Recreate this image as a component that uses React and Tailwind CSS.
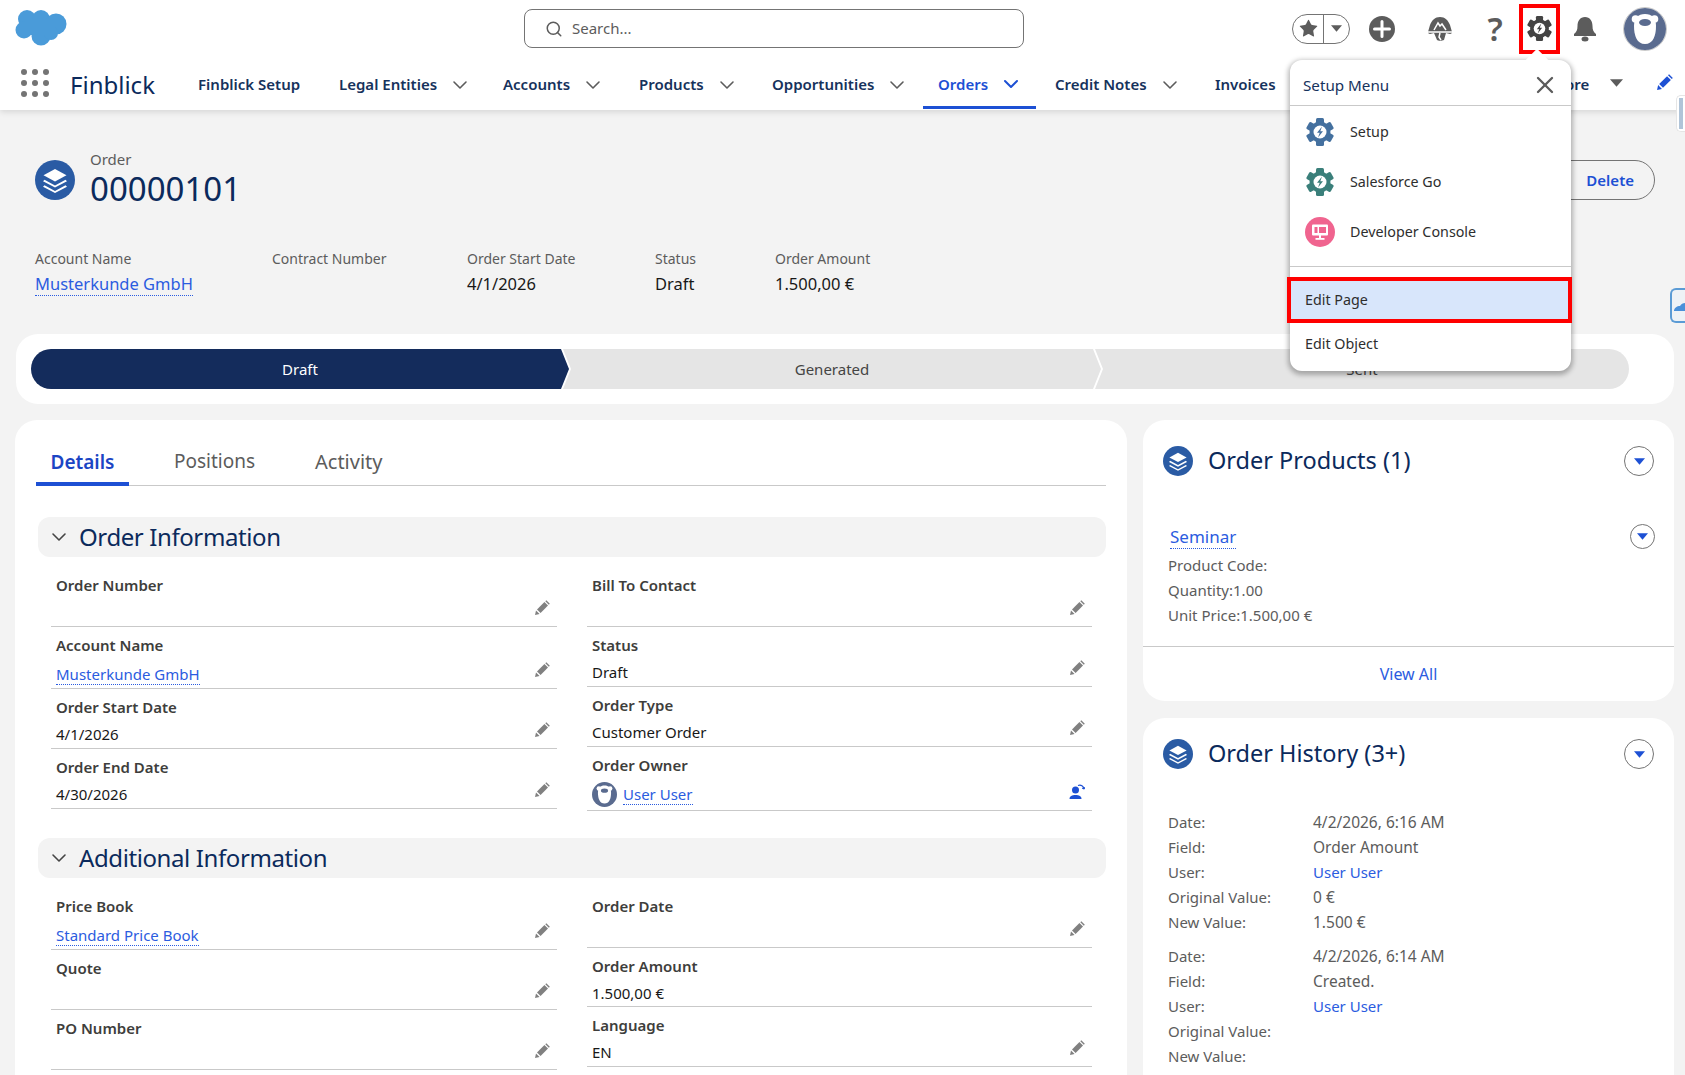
import React from "react";
import { ChevronDown, Star, Search, X } from "lucide-react";

const Pencil = ({ color = "#808080", size = 16 }) => (
  <svg width={size} height={size} viewBox="0 0 16 16" className="shrink-0">
    <path d="M1 15l1-4.6 3.6 3.6z" fill={color} />
    <path d="M3 9.4L10.4 2l3.6 3.6L6.6 13z" fill={color} />
    <path d="M11.3 1.2l1-1 3.5 3.5-1 1z" fill={color} />
  </svg>
);

const Layers = ({ size = 40 }) => (
  <svg width={size} height={size} viewBox="0 0 40 40" className="shrink-0">
    <ellipse cx="20" cy="20" rx="20" ry="20" fill="#2a5ba4" />
    <path d="M20 9l11.5 6.2L20 21.4 8.500 15.200z" fill="#fff" />
    <path d="M9.500 19.800l10.500 5.600 10.500-5.600 1.500 1.500L20 27.600 8 21.300z" fill="#fff" />
    <path d="M9.500 25.300l10.500 5.600 10.500-5.600 1.500 1.500L20 33 8 26.800z" fill="#fff" />
  </svg>
);

const Gear = ({ color, size = 28 }) => (
  <svg width={size} height={size} viewBox="0 0 28 28" className="shrink-0">
    {[0, 60, 120, 180, 240, 300].map((a) => (
      <rect key={a} x="10" y="0" width="8" height="8" rx="1.500" fill={color} transform={`rotate(${a} 14 14)`} />
    ))}
    <circle cx="14" cy="14" r="10.500" fill={color} />
    <circle cx="14" cy="14" r="6.500" fill="#fff" />
    <path d="M16 8.500l-5 6.300h2.700l-1.700 4.700 5-6.300h-2.700z" fill={color} />
  </svg>
);

const Bear = ({ size = 42 }) => (
  <svg width={size} height={size} viewBox="0 0 42 42" className="shrink-0">
    <circle cx="21" cy="21" r="21" fill="#5a6b8f" />
    <circle cx="11.500" cy="11" r="3.800" fill="#fff" />
    <circle cx="30.500" cy="11" r="3.800" fill="#fff" />
    <path d="M21 6c7 0 11 4 11 12 0 10-3 18-11 18S10 28 10 18C10 10 14 6 21 6z" fill="#fff" />
    <ellipse cx="21" cy="14.500" rx="6" ry="3.500" fill="#5a6b8f" />
  </svg>
);

const Caret = ({ color = "#5c5c5c", w = 12, h = 7 }) => (
  <svg width={w} height={h} viewBox="0 0 12 7" className="shrink-0">
    <path d="M0 0h12L6 7z" fill={color} />
  </svg>
);

const MenuCircle = ({ size = 30 }) => (
  <div className="flex shrink-0 items-center justify-center rounded-full border border-[#747474]" style={{ width: size, height: size }}>
    <Caret color="#1d50d4" w={11} h={7} />
  </div>
);

const A = ({ children, className = "" }) => (
  <span className={`border-b border-dotted border-[#2b5ce0] text-[#2b5ce0] ${className}`}>{children}</span>
);

const Field = ({ h, label, value, link, owner, locked }) => (
  <div className={`flex border-b border-[#c9c9c9] pl-[5px] pr-[7px] ${h}`}>
    <div className="flex-1 pt-[8px]">
      <div className="text-[15px] font-semibold leading-[20px] text-[#3e3e3c]">{label}</div>
      {value && !owner && (
        <div className={`${link ? "mt-[9px]" : "mt-[7px]"} text-[15px] leading-[20px] text-[#181818]`}>
          {link ? <A>{value}</A> : value}
        </div>
      )}
      {owner && (
        <div className="mt-[7px] flex items-center gap-[6px] text-[15px] leading-[20px]">
          <Bear size={25} />
          <A>{value}</A>
        </div>
      )}
    </div>
    <div className="self-end pb-[10px]">
      {owner ? (
        <svg width="16" height="16" viewBox="0 0 16 16">
          <circle cx="6.500" cy="6" r="3.500" fill="#1d50d4" />
          <path d="M0.500 15c0-3 2.500-4 6-4s6 1 6 4z" fill="#1d50d4" />
          <path d="M9 1.500c3-1 5.500.5 6 3.500M15 5l-1.800-1M15 5l1-1.800" stroke="#1d50d4" strokeWidth="1.300" fill="none" />
        </svg>
      ) : locked ? null : (
        <Pencil />
      )}
    </div>
  </div>
);

const SectionHead = ({ title, className = "" }) => (
  <div className={`flex h-[40px] items-center gap-[8px] rounded-[12px] bg-[#f3f3f3] pl-[9px] ${className}`}>
    <ChevronDown size={24} strokeWidth={1.600} className="text-[#444]" />
    <span className="text-[24px] leading-none tracking-[-0.4px] text-[#0b2a5c]">{title}</span>
  </div>
);

const Hi = ({ label, value, link, w }) => (
  <div className={`${w}`}>
    <div className="text-[14px] leading-[20px] text-[#5c5c5c]">{label}</div>
    <div className="mt-[4px] text-[16.500px] leading-[22px] text-[#181818]">{link ? <A>{value}</A> : value}</div>
  </div>
);

const NavItem = ({ label, chev, className = "", w }) => (
  <div className={`flex h-full items-center pt-[4px] ${w} ${className}`}>
    <span className="text-[15px] font-semibold text-[#16325c]">{label}</span>
    {chev && <ChevronDown size={24} strokeWidth={1.600} className="ml-[11px] text-[#5c5c5c]" />}
  </div>
);

const HRow = ({ l, v, link }) => (
  <div className="flex h-[25px] items-center text-[15px]">
    <div className="w-[145px] text-[#5c5c5c]">{l}</div>
    <div className="text-[#5c5c5c]">{link ? <span className="text-[#2b5ce0]">{v}</span> : <span className="text-[15.500px]">{v}</span>}</div>
  </div>
);

export default function App() {
  return (
    <div className="relative h-[1075px] w-[1685px] overflow-hidden bg-[#f3f3f3] font-['Noto_Sans','Open_Sans',sans-serif]">
      <header className="h-[110px] bg-white shadow-[0_2px_6px_rgba(0,0,0,0.12)]">
        <div className="flex h-[55px] items-center pt-[2px]">
          <svg width="52" height="37" viewBox="0 0 52 37" className="ml-[15px] mb-[3px] shrink-0">
            <g fill="#4a9bd9">
              <circle cx="12" cy="10" r="9" />
              <circle cx="26" cy="10" r="9" />
              <circle cx="41" cy="15" r="10.500" />
              <circle cx="9" cy="21" r="8.500" />
              <circle cx="26" cy="27" r="9.500" />
              <circle cx="36" cy="24" r="7" />
              <rect x="10" y="10" width="30" height="16" />
            </g>
          </svg>
          <div className="ml-[457px] flex h-[39px] w-[500px] items-center rounded-[8px] border border-[#747474] bg-white pl-[20px]">
            <Search size={18} strokeWidth={2} className="text-[#5c5c5c]" />
            <span className="ml-[9px] text-[15px] text-[#5c5c5c]">Search...</span>
          </div>
          <div className="ml-[268px] flex h-[30px] w-[58px] items-center rounded-full border border-[#747474]">
            <div className="flex h-full w-[31px] items-center justify-center border-r border-[#747474]">
              <Star size={21} fill="#5c5c5c" strokeWidth={0} />
            </div>
            <div className="flex flex-1 items-center justify-center"><Caret w={11} h={7} /></div>
          </div>
          <svg width="26" height="26" viewBox="0 0 26 26" className="ml-[19px] shrink-0">
            <circle cx="13" cy="13" r="13" fill="#5c5c5c" />
            <path d="M13 5.500v15M5.500 13h15" stroke="#fff" strokeWidth="3" strokeLinecap="round" />
          </svg>
          <svg width="26" height="26" viewBox="0 0 26 26" className="ml-[32px] shrink-0">
            <path d="M13 1C8 1 5 4 3 9L1 16c0 1 1 2 2 2l4-1 3 7c1 1 5 1 7 0l2-7 4 1c1 0 2-1 2-2l-2-7C21 4 18 1 13 1z" fill="#5c5c5c" />
            <path d="M7 14l4-7 2 3 2-2 4 6M1 16h24M13 17l-1 4 2 3" stroke="#fff" strokeWidth="1.500" fill="none" />
          </svg>
          <span className="ml-[28px] w-[28px] text-center text-[33px] font-semibold leading-none text-[#5c5c5c]">?</span>
          <div className="ml-[10px] flex h-[50px] w-[41px] shrink-0 items-center justify-center border-[4px] border-[#ff0000]">
            <Gear color="#444" size={25} />
          </div>
          <svg width="24" height="26" viewBox="0 0 24 26" className="ml-[13px] shrink-0">
            <path d="M12 1c-5 0-7.500 4-7.500 9 0 4-1 6-3.500 8v2h22v-2c-2.500-2-3.500-4-3.500-8 0-5-2.500-9-7.500-9z" fill="#5c5c5c" />
            <ellipse cx="12" cy="23" rx="3.500" ry="2.500" fill="#5c5c5c" />
          </svg>
          <div className="ml-[26px] shrink-0 rounded-full border border-[#c9c9c9]"><Bear size={42} /></div>
        </div>
        <nav className="flex h-[55px] items-center">
          <svg width="28" height="28" viewBox="0 0 28 28" className="ml-[21px] mt-[1px] shrink-0">
            <g fill="#747474">
              {[3, 14, 25].map((y) => [3, 14, 25].map((x) => <circle key={`${x}${y}`} cx={x} cy={y} r="3" />))}
            </g>
          </svg>
          <span className="ml-[21px] mt-[5px] w-[128px] text-[24px] leading-none text-[#0b2a5c]">Finblick</span>
          <NavItem w="w-[141px]" label="Finblick Setup" />
          <NavItem w="w-[164px]" label="Legal Entities" chev />
          <NavItem w="w-[136px]" label="Accounts" chev />
          <NavItem w="w-[133px]" label="Products" chev />
          <NavItem w="w-[151px]" label="Opportunities" chev />
          <div className="flex h-[54px] w-[113px] items-center self-start border-b-[3px] border-[#1d50d4] pl-[15px] pt-[7px]">
            <span className="text-[15px] font-semibold text-[#1d50d4]">Orders</span>
            <ChevronDown size={24} strokeWidth={2} className="ml-[11px] text-[#1d50d4]" />
          </div>
          <NavItem w="w-[160px]" className="ml-[19px]" label="Credit Notes" chev />
          <NavItem w="w-[336px]" label="Invoices" />
          <span className="mt-[4px] w-[42px] text-[15px] font-semibold text-[#16325c]">More</span>
          <div className="ml-[17px]"><Caret w={13} h={8} /></div>
          <div className="ml-[33px]"><Pencil color="#1d50d4" size={17} /></div>
        </nav>
      </header>

      <main className="pl-[15px] pr-[11px]">
        <div className="flex h-[224px] flex-col">
          <div className="mt-[39px] flex items-start pl-[20px]">
            <div className="mt-[11px]"><Layers size={40} /></div>
            <div className="ml-[15px]">
              <div className="text-[15px] leading-[20px] text-[#5c5c5c]">Order</div>
              <div className="text-[33px] leading-[40px] text-[#0b2a5c]">00000101</div>
            </div>
          </div>
          <div className="mt-[40px] flex pl-[20px]">
            <Hi w="w-[237px]" label="Account Name" value="Musterkunde GmbH" link />
            <Hi w="w-[195px]" label="Contract Number" />
            <Hi w="w-[188px]" label="Order Start Date" value="4/1/2026" />
            <Hi w="w-[120px]" label="Status" value="Draft" />
            <Hi w="w-[160px]" label="Order Amount" value="1.500,00 €" />
          </div>
        </div>

        <div className="ml-[1px] flex h-[70px] items-center rounded-[22px] bg-white pl-[15px]">
          <div className="flex h-[40px] w-[1598px] text-[15px]">
            <div className="flex w-[538px] items-center justify-center rounded-l-full bg-[#142c5c] text-white [clip-path:polygon(0_0,530px_0,538px_50%,530px_100%,0_100%)]">Draft</div>
            <div className="-ml-[6px] flex w-[538px] items-center justify-center bg-[#e5e5e5] text-[#444] [clip-path:polygon(0_0,530px_0,538px_50%,530px_100%,0_100%,8px_50%)]">Generated</div>
            <div className="-ml-[6px] flex flex-1 items-center justify-center rounded-r-full bg-[#e5e5e5] text-[#444] [clip-path:polygon(0_0,100%_0,100%_100%,0_100%,8px_50%)]">Sent</div>
          </div>
        </div>

        <div className="mt-[16px] flex gap-[16px]">
          <section className="h-[700px] w-[1112px] shrink-0 rounded-[22px] bg-white px-[21px]">
            <div className="flex h-[66px] items-end border-b border-[#c9c9c9]">
              <div className="-mb-px flex h-[40px] w-[93px] items-start justify-center border-b-[4px] border-[#1d50d4] pt-[2px] text-[19px] font-semibold text-[#1b45c4]">Details</div>
              <div className="ml-[45px] h-[40px] w-[141px] pt-[2px] text-[19px] text-[#5c5c5c]">Positions</div>
              <div className="h-[40px] pt-[2px] text-[20px] text-[#5c5c5c]">Activity</div>
            </div>
            <SectionHead title="Order Information" className="mt-[31px] ml-[2px]" />
            <div className="ml-[15px] mt-[10px] flex w-[1041px] justify-between">
              <div className="w-[506px]">
                <Field h="h-[60px]" label="Order Number" />
                <Field h="h-[62px]" label="Account Name" value="Musterkunde GmbH" link />
                <Field h="h-[60px]" label="Order Start Date" value="4/1/2026" />
                <Field h="h-[60px]" label="Order End Date" value="4/30/2026" />
              </div>
              <div className="w-[505px]">
                <Field h="h-[60px]" label="Bill To Contact" />
                <Field h="h-[60px]" label="Status" value="Draft" />
                <Field h="h-[60px]" label="Order Type" value="Customer Order" />
                <Field h="h-[64px]" label="Order Owner" value="User User" link owner />
              </div>
            </div>
            <SectionHead title="Additional Information" className="mt-[27px] ml-[2px]" />
            <div className="ml-[15px] mt-[10px] flex w-[1041px] justify-between">
              <div className="w-[506px]">
                <Field h="h-[62px]" label="Price Book" value="Standard Price Book" link />
                <Field h="h-[60px]" label="Quote" />
                <Field h="h-[60px]" label="PO Number" />
              </div>
              <div className="w-[505px]">
                <Field h="h-[60px]" label="Order Date" />
                <Field h="h-[59px]" label="Order Amount" value="1.500,00 €" locked />
                <Field h="h-[60px]" label="Language" value="EN" />
              </div>
            </div>
          </section>

          <aside className="w-[531px] shrink-0">
            <section className="h-[281px] rounded-[22px] bg-white">
              <div className="flex h-[82px] items-center pl-[20px] pr-[20px]">
                <Layers size={30} />
                <span className="ml-[15px] flex-1 text-[23.500px] text-[#0b2a5c]">Order Products (1)</span>
                <MenuCircle size={30} />
              </div>
              <div className="flex pl-[25px] pr-[19px] pt-[23px]">
                <div className="flex-1">
                  <div className="ml-[2px] text-[17px] leading-[24px]"><A>Seminar</A></div>
                  <div className="mt-[4px] text-[15px] leading-[25px] text-[#5c5c5c]">
                    <div>Product Code:</div>
                    <div>Quantity:1.00</div>
                    <div>Unit Price:1.500,00 €</div>
                  </div>
                </div>
                <div className="-mt-[1px]"><MenuCircle size={25} /></div>
              </div>
              <div className="mt-[18px] flex h-[55px] items-center justify-center border-t border-[#c9c9c9] text-[16px] text-[#2b5ce0]">View All</div>
            </section>
            <section className="mt-[17px] h-[400px] rounded-[22px] bg-white">
              <div className="flex h-[72px] items-center pl-[20px] pr-[20px]">
                <Layers size={30} />
                <span className="ml-[15px] flex-1 text-[23.500px] text-[#0b2a5c]">Order History (3+)</span>
                <MenuCircle size={30} />
              </div>
              <div className="pl-[25px] pt-[20px]">
                <HRow l="Date:" v="4/2/2026, 6:16 AM" />
                <HRow l="Field:" v="Order Amount" />
                <HRow l="User:" v="User User" link />
                <HRow l="Original Value:" v="0 €" />
                <HRow l="New Value:" v="1.500 €" />
                <div className="h-[9px]" />
                <HRow l="Date:" v="4/2/2026, 6:14 AM" />
                <HRow l="Field:" v="Created." />
                <HRow l="User:" v="User User" link />
                <HRow l="Original Value:" />
                <HRow l="New Value:" />
              </div>
            </section>
          </aside>
        </div>
      </main>

      {/* overlay handles on the right edge */}
      <div className="absolute right-0 top-[95px] h-[37px] w-[9px] rounded-l-[5px] border border-r-0 border-[#e5e5e5] bg-white p-[2px]">
        <div className="h-full w-full bg-[#b0c4d8]" />
      </div>
      <div className="absolute right-0 top-[288px] h-[35px] w-[15px] overflow-hidden rounded-l-[6px] border-2 border-r-0 border-[#5b9bd5] bg-[#eef2f6]">
        <svg width="13" height="31" viewBox="0 0 13 31"><path d="M2 21c0-3 3-5 6-5 1-2 3-3 5-3v8z" fill="#4a90d9" /></svg>
      </div>

      {/* Delete button, partly under the menu */}
      <div className="absolute left-[1500px] top-[160px] flex h-[40px] w-[155px] items-center justify-end rounded-r-full border border-[#747474] pr-[20px] text-[15px] font-semibold text-[#1d50d4]">Delete</div>

      {/* Setup menu popover */}
      <div className="absolute left-[1290px] top-[60px] w-[281px] rounded-[12px] bg-white shadow-[0_2px_5px_2px_rgba(0,0,0,0.28)]">
        <div className="absolute -top-[8px] left-[239px] h-[16px] w-[16px] rotate-45 bg-white" />
        <div className="relative flex h-[46px] items-center justify-between border-b border-[#c9c9c9] pl-[13px] pr-[12px] pt-[5px]">
          <span className="text-[15.200px] text-[#16325c]">Setup Menu</span>
          <X size={28} strokeWidth={2} className="text-[#5c5c5c]" />
        </div>
        <div className="flex h-[50px] items-center pl-[16px] pt-[1px] text-[14.300px] text-[#2e2e2e]"><Gear color="#44709f" size={28} /><span className="ml-[16px]">Setup</span></div>
        <div className="flex h-[50px] items-center pl-[16px] pt-[1px] text-[14.300px] text-[#2e2e2e]"><Gear color="#3a7f7a" size={28} /><span className="ml-[16px]">Salesforce Go</span></div>
        <div className="flex h-[50px] items-center pl-[16px] pt-[1px] text-[14.300px] text-[#2e2e2e]">
          <svg width="30" height="30" viewBox="0 0 30 30" className="-ml-[1px] mr-[-1px] shrink-0">
            <circle cx="15" cy="15" r="15" fill="#f0648f" />
            <rect x="7" y="7.500" width="16" height="11" rx="1" fill="#fff" />
            <rect x="9.500" y="10" width="3" height="6" fill="#f0648f" />
            <rect x="14" y="10" width="7" height="6" fill="#f0648f" />
            <rect x="14" y="18" width="2" height="3" fill="#fff" />
            <rect x="10.500" y="21" width="9" height="1.800" fill="#fff" />
          </svg>
          <span className="ml-[16px]">Developer Console</span>
        </div>
        <div className="mt-[10px] border-t border-[#c9c9c9]" />
        <div className="relative -ml-[3px] -mr-[1px] mt-[10px] flex h-[46px] items-center border-[4px] border-[#ff0000] bg-[#d8e6fb] pl-[14px] text-[14.300px] text-[#2e2e2e]">Edit Page</div>
        <div className="flex h-[48px] items-center pb-[6px] pl-[15px] text-[14.300px] text-[#2e2e2e]">Edit Object</div>
      </div>
    </div>
  );
}
